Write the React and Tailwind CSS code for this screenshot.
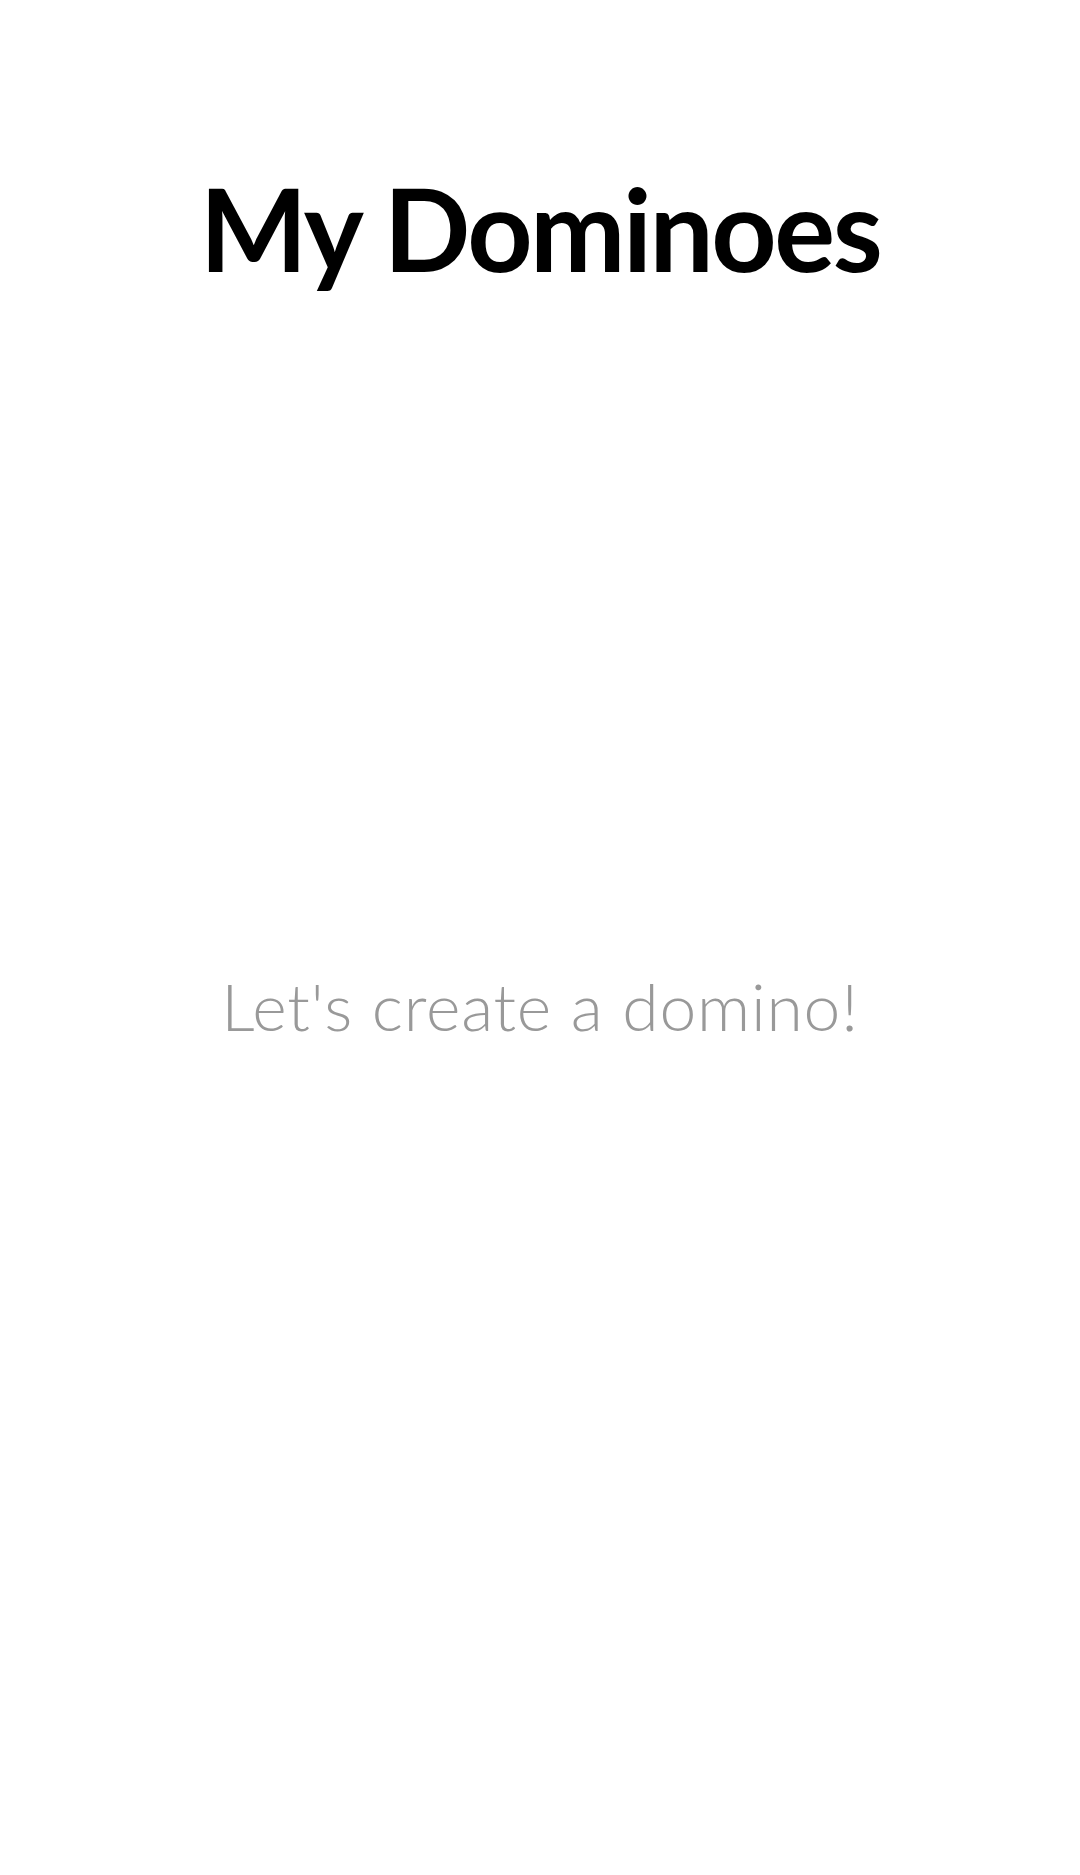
export default function App() {
  return (
    <div className="min-h-[1875px] w-full bg-white flex flex-col items-center font-['Lato',sans-serif]">
      <h1 className="mt-[171px] text-[114px] leading-none font-bold tracking-[-2.5px] text-black">
        My Dominoes
      </h1>
      <p className="mt-[688px] text-[66px] leading-none font-light tracking-[0.8px] text-[#999999]">
        Let's create a domino!
      </p>
    </div>
  );
}
